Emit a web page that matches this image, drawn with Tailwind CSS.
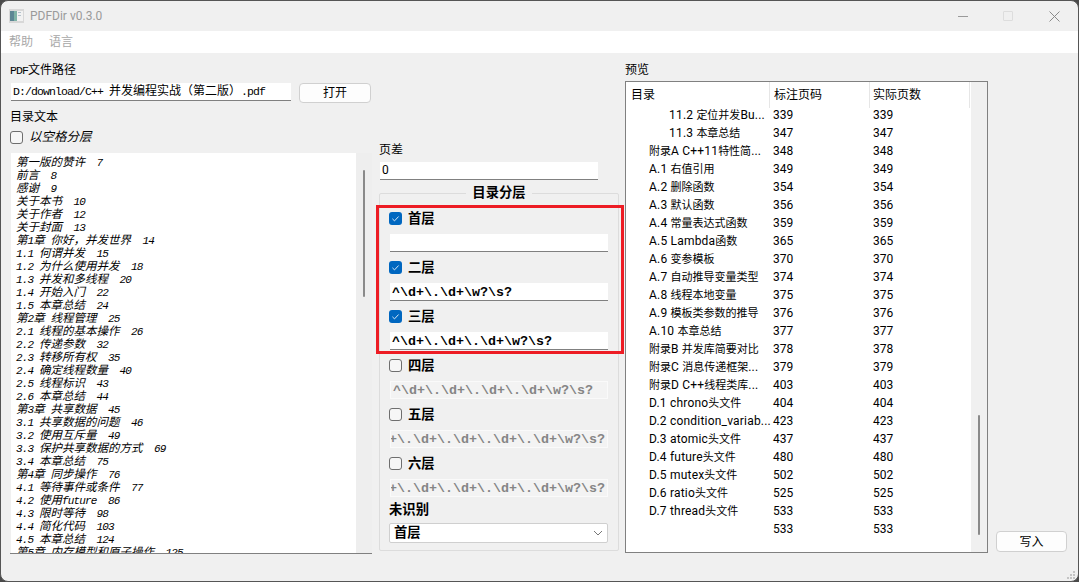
<!DOCTYPE html>
<html lang="zh-CN">
<head>
    <meta charset="UTF-8">
    <title>PDFDir v0.3.0</title>
    <script src="https://cdn.jsdelivr.net/npm/@tailwindcss/browser@4"></script>
</head>
<body class="bg-[#4a4a4a] overflow-hidden font-['Roboto','Noto_Sans_CJK_SC',sans-serif] text-[12px] text-black">
<div class="w-[1079px] h-[582px] border border-[#555555] rounded-[8px] overflow-hidden bg-[#f0f0f0] flex flex-col relative">

    <!-- title bar -->
    <div class="h-[30px] shrink-0 flex items-center pl-[8px] text-[#9a9a9a]">
        <svg width="15" height="14" viewBox="0 0 15 14" class="mr-[6px]">
            <rect x="0" y="0" width="15" height="14" fill="#d8d8d8"/>
            <rect x="1" y="2" width="4" height="10" fill="#5d8794"/>
            <rect x="5" y="2" width="3" height="10" fill="#7fb3a6"/>
            <rect x="8" y="2" width="6" height="10" fill="#f2f2f2"/>
            <rect x="9" y="3" width="3" height="1" fill="#b4c2cc"/>
            <rect x="9" y="6" width="3" height="1" fill="#b4c2cc"/>
        </svg>
        <span>PDFDir v0.3.0</span>
        <div class="ml-auto flex items-center">
            <div class="w-[10px] h-px bg-[#9a9a9a] mr-[35px]"></div>
            <div class="w-[10px] h-[10px] border border-[#dddddd] rounded-[1px] mr-[36px]"></div>
            <svg width="11" height="11" viewBox="0 0 11 11" class="mr-[18px]" stroke="#8a8a8a" stroke-width="1"><path d="M0.5 0.5l10 10M10.5 0.5l-10 10"/></svg>
        </div>
    </div>

    <!-- menu -->
    <div class="h-[22px] shrink-0 bg-white flex items-center pl-[8px] gap-[16px] text-[#a8a8a8]">
        <span>帮助</span>
        <span>语言</span>
    </div>

    <div class="flex pl-[9px] items-start">

        <!-- left column -->
        <div class="w-[362px] shrink-0 flex flex-col">
            <div class="mt-[10px] h-[14px] leading-[14px]"><span class="font-['Liberation_Mono'] text-[11.5px] tracking-[-0.9px]">PDF</span>文件路径</div>
            <div class="mt-[6px] flex items-start">
                <div class="ml-px w-[280px] h-[18px] leading-[17px] bg-white border-b border-[#808080] pl-[2px] whitespace-pre overflow-hidden"><span class="font-['Liberation_Mono'] text-[11.5px] tracking-[-0.9px]">D:/download/C++ </span>并发编程实战（第二版）<span class="font-['Liberation_Mono'] text-[11.5px] tracking-[-0.9px]">.pdf</span></div>
                <button class="ml-[8px] w-[72px] h-[20px] bg-[#fdfdfd] border border-[#d0d0d0] rounded-[4px] text-[12px]">打开</button>
            </div>
            <div class="mt-[7px] h-[14px] leading-[14px]">目录文本</div>
            <div class="mt-[6px] h-[14px] flex items-center">
                <div class="w-[13px] h-[13px] border-[1.5px] border-[#6e6e6e] rounded-[3px] bg-[#f6f6f6]"></div>
                <span class="ml-[6px] italic text-[12.5px]">以空格分层</span>
            </div>
            <div class="mt-[9px] h-[401px] flex border-b border-[#808080]">
                <div id="toc-text" class="ml-px w-[345px] bg-white pl-[5px] pt-[3px] italic overflow-hidden text-[11.5px] leading-[13px] whitespace-pre"></div>
                <div class="flex-1 bg-[#eeeeee] pl-[7px]">
                    <div class="mt-[17px] w-[2px] h-[127px] bg-[#8a8a8a] rounded-full"></div>
                </div>
            </div>
        </div>

        <!-- middle column -->
        <div class="ml-[7px] w-[240px] shrink-0 flex flex-col">
            <div class="mt-[90px] h-[14px] leading-[14px]">页差</div>
            <div class="mt-[5px] ml-px w-[218px] h-[18px] leading-[17px] bg-white border-b border-[#808080] pl-[2px]">0</div>

            <div class="mt-[13px] h-[358px] border border-[#dcdcdc] rounded-[2px] relative pl-[9px]">
                <div class="-mt-[9px] -ml-[9px] flex justify-center">
                    <div class="h-[16px] leading-[16px] bg-[#f0f0f0] px-[6px] font-bold text-[13.33px]">目录分层</div>
                </div>
                <div class="mt-[11px] flex flex-col gap-[9px] font-bold text-[13.33px]">
                    <div class="h-[13px] flex items-center">
                        <svg width="13" height="13" viewBox="0 0 13 13"><rect width="13" height="13" rx="3" fill="#0067c0"/><path d="M3.4 6.8l2.1 2.1 4.1-4.4" fill="none" stroke="#d8e8f6" stroke-width="1"/></svg>
                        <span class="ml-[6px]">首层</span>
                    </div>
                    <div class="ml-px w-[218px] h-[18px] bg-white border-b border-[#808080]"></div>
                    <div class="h-[13px] flex items-center">
                        <svg width="13" height="13" viewBox="0 0 13 13"><rect width="13" height="13" rx="3" fill="#0067c0"/><path d="M3.4 6.8l2.1 2.1 4.1-4.4" fill="none" stroke="#d8e8f6" stroke-width="1"/></svg>
                        <span class="ml-[6px]">二层</span>
                    </div>
                    <div class="ml-px w-[218px] h-[18px] leading-[19px] bg-white border-b border-[#808080] pl-[2px] font-['Liberation_Mono'] whitespace-pre">^\d+\.\d+\w?\s?</div>
                    <div class="h-[13px] flex items-center">
                        <svg width="13" height="13" viewBox="0 0 13 13"><rect width="13" height="13" rx="3" fill="#0067c0"/><path d="M3.4 6.8l2.1 2.1 4.1-4.4" fill="none" stroke="#d8e8f6" stroke-width="1"/></svg>
                        <span class="ml-[6px]">三层</span>
                    </div>
                    <div class="ml-px w-[218px] h-[18px] leading-[19px] bg-white border-b border-[#808080] pl-[2px] font-['Liberation_Mono'] whitespace-pre">^\d+\.\d+\.\d+\w?\s?</div>
                    <div class="h-[13px] flex items-center">
                        <div class="w-[13px] h-[13px] border-[1.5px] border-[#6e6e6e] rounded-[3px] bg-[#f6f6f6]"></div>
                        <span class="ml-[6px]">四层</span>
                    </div>
                    <div class="ml-px w-[218px] h-[18px] leading-[17px] bg-[#f3f3f3] border border-[#fafafa] pl-[2px] font-['Liberation_Mono'] text-[#858585] whitespace-pre">^\d+\.\d+\.\d+\.\d+\w?\s?</div>
                    <div class="h-[13px] flex items-center">
                        <div class="w-[13px] h-[13px] border-[1.5px] border-[#6e6e6e] rounded-[3px] bg-[#f6f6f6]"></div>
                        <span class="ml-[6px]">五层</span>
                    </div>
                    <div class="ml-px w-[218px] h-[18px] leading-[17px] bg-[#f3f3f3] border border-[#fafafa] pr-[2px] font-['Liberation_Mono'] text-[#858585] whitespace-pre overflow-hidden flex justify-end">^\d+\.\d+\.\d+\.\d+\.\d+\w?\s?</div>
                    <div class="h-[13px] flex items-center">
                        <div class="w-[13px] h-[13px] border-[1.5px] border-[#6e6e6e] rounded-[3px] bg-[#f6f6f6]"></div>
                        <span class="ml-[6px]">六层</span>
                    </div>
                    <div class="ml-px w-[218px] h-[18px] leading-[17px] bg-[#f3f3f3] border border-[#fafafa] pr-[2px] font-['Liberation_Mono'] text-[#858585] whitespace-pre overflow-hidden flex justify-end">^\d+\.\d+\.\d+\.\d+\.\d+\.\d+\w?\s?</div>
                </div>
                <div class="mt-[6px] h-[14px] leading-[14px] font-bold text-[13.33px]">未识别</div>
                <div class="mt-[6px] w-[219px] h-[20px] bg-white border border-[#cfcfcf] rounded-[2px] flex items-center pl-[4px] pr-[4px] font-bold text-[13.33px]">
                    <span>首层</span>
                    <svg width="10" height="6" viewBox="0 0 10 6" class="ml-auto" fill="none" stroke="#777777"><path d="M1 1l4 4 4-4"/></svg>
                </div>
                <!-- red annotation -->
                <div class="absolute left-[-4px] top-[11px] w-[248px] h-[149px] border-[3px] border-[#ed1c24]"></div>
            </div>
        </div>

        <!-- preview column -->
        <div class="ml-[6px] w-[363px] shrink-0 flex flex-col">
            <div class="mt-[10px] h-[14px] leading-[14px]">预览</div>
            <div class="mt-[4px] h-[472px] border border-[#808080] flex overflow-hidden">
                <div class="w-[345px] bg-white">
                    <div class="h-[24px] grid grid-cols-[144px_100px_100px] items-stretch leading-[26px]">
                        <div class="pl-[5px] border-r border-[#e6e6e6]">目录</div>
                        <div class="pl-[4px] border-r border-[#e6e6e6]">标注页码</div>
                        <div class="pl-[3px] border-r border-[#e6e6e6]">实际页数</div>
                    </div>
                    <div id="toc-rows"></div>
                </div>
                <div class="flex-1 pl-[7px]">
                    <div class="mt-[333px] w-[2px] h-[120px] bg-[#8a8a8a] rounded-full"></div>
                </div>
            </div>
        </div>

        <!-- write button -->
        <div class="ml-[8px] mt-[478px]">
            <button class="w-[71px] h-[21px] bg-[#fdfdfd] border border-[#d0d0d0] rounded-[4px] text-[12px]">写入</button>
        </div>
    </div>

    <!-- resize grip -->
    <svg width="8" height="8" viewBox="0 0 8 8" class="absolute right-[3px] bottom-[2px]" fill="#c4c4c4">
        <rect x="6" y="0" width="2" height="2"/>
        <rect x="3" y="3" width="2" height="2"/><rect x="6" y="3" width="2" height="2"/>
        <rect x="0" y="6" width="2" height="2"/><rect x="3" y="6" width="2" height="2"/><rect x="6" y="6" width="2" height="2"/>
    </svg>
</div>

<script>
    const tocLines = [
        '第一版的赞许  7', '前言  8', '感谢  9', '关于本书  10', '关于作者  12', '关于封面  13',
        '第1章 你好，并发世界  14', '1.1 何谓并发  15', '1.2 为什么使用并发  18', '1.3 并发和多线程  20',
        '1.4 开始入门  22', '1.5 本章总结  24', '第2章 线程管理  25', '2.1 线程的基本操作  26',
        '2.2 传递参数  32', '2.3 转移所有权  35', '2.4 确定线程数量  40', '2.5 线程标识  43',
        '2.6 本章总结  44', '第3章 共享数据  45', '3.1 共享数据的问题  46', '3.2 使用互斥量  49',
        '3.3 保护共享数据的方式  69', '3.4 本章总结  75', '第4章 同步操作  76', '4.1 等待事件或条件  77',
        '4.2 使用future  86', '4.3 限时等待  98', '4.4 简化代码  103', '4.5 本章总结  124',
        '第5章 内存模型和原子操作  125'
    ];
    document.getElementById('toc-text').innerHTML = tocLines.map(line =>
        '<div class="h-[13px]">' + line.replace(/[\x20-\x7e]+/g, m =>
            `<span class="font-['Liberation_Mono'] text-[11px] tracking-[-0.85px]">${m}</span>`) + '</div>'
    ).join('');

    const rows = [
        [2, '11.2 定位并发Bu...', 339], [2, '11.3 本章总结', 347], [1, '附录A C++11特性简...', 348],
        [1, 'A.1 右值引用', 349], [1, 'A.2 删除函数', 354], [1, 'A.3 默认函数', 356],
        [1, 'A.4 常量表达式函数', 359], [1, 'A.5 Lambda函数', 365], [1, 'A.6 变参模板', 370],
        [1, 'A.7 自动推导变量类型', 374], [1, 'A.8 线程本地变量', 375], [1, 'A.9 模板类参数的推导', 376],
        [1, 'A.10 本章总结', 377], [1, '附录B 并发库简要对比', 378], [1, '附录C 消息传递框架...', 379],
        [1, '附录D C++线程类库...', 403], [1, 'D.1 chrono头文件', 404], [1, 'D.2 condition_variab...', 423],
        [1, 'D.3 atomic头文件', 437], [1, 'D.4 future头文件', 480], [1, 'D.5 mutex头文件', 502],
        [1, 'D.6 ratio头文件', 525], [1, 'D.7 thread头文件', 533], [1, '', 533]
    ];
    // CJK in the table is a touch narrower than the latin beside it
    const cjkSmall = s => s.replace(/[^\x20-\x7e]+/g, m => `<span class="text-[11px] tracking-normal">${m}</span>`);
    document.getElementById('toc-rows').innerHTML = rows.map(([level, title, page]) => `
        <div class="h-[18px] leading-[18px] grid grid-cols-[144px_100px_100px] whitespace-nowrap">
            <div class="tracking-[0.2px] ${level === 2 ? 'pl-[43px]' : 'pl-[23px]'}">${cjkSmall(title)}</div>
            <div class="pl-[3px]">${page}</div>
            <div class="pl-[3px]">${page}</div>
        </div>`).join('');
</script>
</body>
</html>
